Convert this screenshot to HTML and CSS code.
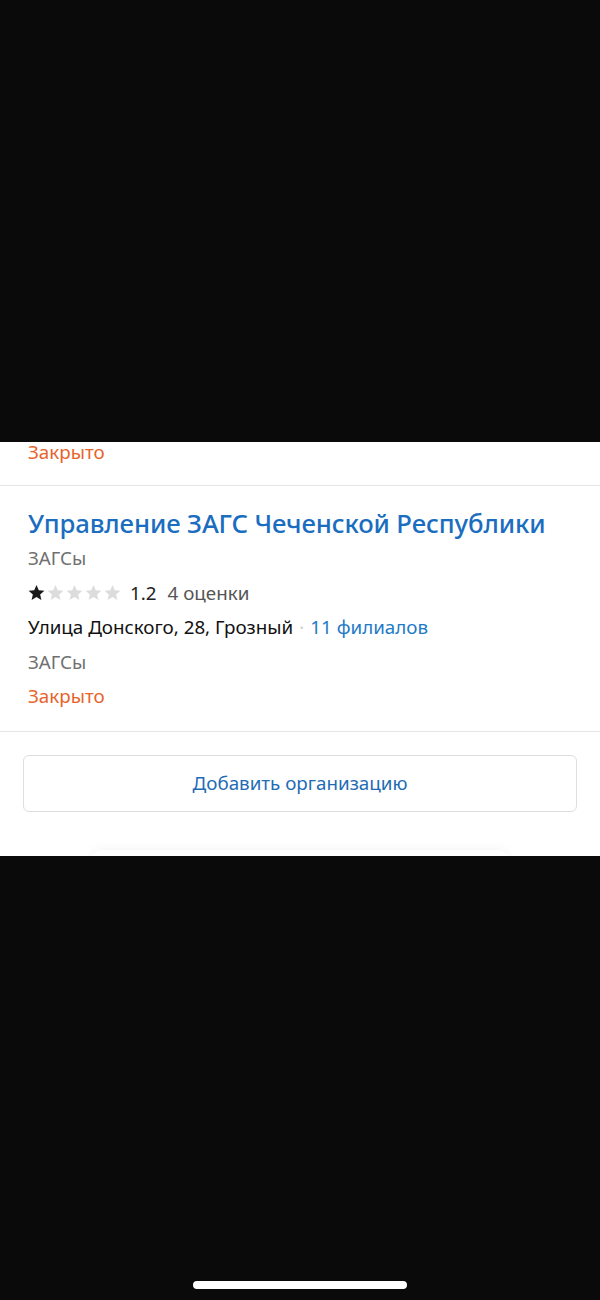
FILE: index.html
```html
<!DOCTYPE html>
<html lang="ru">
<head>
<meta charset="utf-8">
<link rel="stylesheet" href="styles.css">
</head>
<body>
<div class="screen">
  <div class="top-black"></div>
  <div class="panel">
    <div class="prev">
      <div class="status">Закрыто</div>
    </div>
    <div class="card">
      <div class="title">Управление ЗАГС Чеченской Республики</div>
      <div class="row gray">ЗАГСы</div>
      <div class="row rating">
        <span class="stars">
          <svg class="star on" viewBox="0 0 24 24"><path d="M12 2.5l2.9 6.6 7.1.6-5.4 4.7 1.6 7L12 17.7l-6.2 3.7 1.6-7L2 9.7l7.1-.6z"/></svg>
          <svg class="star" viewBox="0 0 24 24"><path d="M12 2.5l2.9 6.6 7.1.6-5.4 4.7 1.6 7L12 17.7l-6.2 3.7 1.6-7L2 9.7l7.1-.6z"/></svg>
          <svg class="star" viewBox="0 0 24 24"><path d="M12 2.5l2.9 6.6 7.1.6-5.4 4.7 1.6 7L12 17.7l-6.2 3.7 1.6-7L2 9.7l7.1-.6z"/></svg>
          <svg class="star" viewBox="0 0 24 24"><path d="M12 2.5l2.9 6.6 7.1.6-5.4 4.7 1.6 7L12 17.7l-6.2 3.7 1.6-7L2 9.7l7.1-.6z"/></svg>
          <svg class="star" viewBox="0 0 24 24"><path d="M12 2.5l2.9 6.6 7.1.6-5.4 4.7 1.6 7L12 17.7l-6.2 3.7 1.6-7L2 9.7l7.1-.6z"/></svg>
        </span>
        <span class="score">1.2</span>
        <span class="count">4 оценки</span>
      </div>
      <div class="row address">Улица Донского, 28, Грозный<span class="dot">·</span><span class="link">11 филиалов</span></div>
      <div class="row gray">ЗАГСы</div>
      <div class="row status">Закрыто</div>
    </div>
    <div class="actions">
      <div class="btn">Добавить организацию</div>
    </div>
    <div class="peek"></div>
  </div>
  <div class="bottom-black">
    <div class="home-indicator"></div>
  </div>
</div>
</body>
</html>
```
FILE: styles.css
```css
html, body {
  margin: 0;
  padding: 0;
  background: #0a0a0a;
}
.screen {
  width: 600px;
  height: 1300px;
  display: flex;
  flex-direction: column;
  font-family: "Noto Sans", "Open Sans", sans-serif;
}
.top-black {
  height: 442px;
  flex-shrink: 0;
  background: #0a0a0a;
}
.panel {
  background: #fff;
  height: 414px;
  flex-shrink: 0;
  display: flex;
  flex-direction: column;
  overflow: hidden;
}
.panel > * {
  flex-shrink: 0;
}
.prev {
  padding: 0 28px;
  height: 43px;
  border-bottom: 1px solid #e6e6e6;
}
.prev .status {
  line-height: 20px;
}
.status {
  color: #e8632c;
  font-size: 18.8px;
}
.card {
  padding: 21px 28px 17px;
  border-bottom: 1px solid #e6e6e6;
}
.title {
  color: #1a6dbf;
  font-size: 25.7px;
  line-height: 34px;
  font-weight: 500;
  letter-spacing: -0.1px;
  white-space: nowrap;
}
.row {
  font-size: 18.8px;
  line-height: 34.5px;
  color: #111;
  white-space: nowrap;
}
.row.status {
  color: #e8632c;
}
.gray {
  color: #707070;
}
.rating {
  display: flex;
  align-items: center;
}
.stars {
  display: flex;
  gap: 0;
  margin-right: 8px;
  margin-left: -1px;
}
.star {
  width: 19px;
  height: 19px;
  fill: #dcdcdc;
}
.star.on {
  fill: #1a1a1a;
}
.score {
  color: #222;
  margin-right: 11px;
}
.count {
  color: #555;
}
.dot {
  color: #cfcfcf;
  margin: 0 6px;
}
.link {
  color: #1e7bc6;
}
.actions {
  padding: 23px 23px 0;
}
.btn {
  height: 57px;
  border: 1px solid #dedede;
  border-radius: 6px;
  display: flex;
  align-items: center;
  justify-content: center;
  color: #1f6cb5;
  font-size: 18.8px;
  box-sizing: border-box;
}
.peek {
  margin: 38px 90px 0;
  height: 12px;
  border-radius: 12px 12px 0 0;
  box-shadow: 0 -2px 8px rgba(0, 0, 0, 0.04);
}
.bottom-black {
  flex: 1;
  background: #0a0a0a;
  display: flex;
  justify-content: center;
  align-items: flex-end;
  padding-bottom: 11px;
}
.home-indicator {
  width: 214px;
  height: 8px;
  border-radius: 4px;
  background: #fff;
}
```
